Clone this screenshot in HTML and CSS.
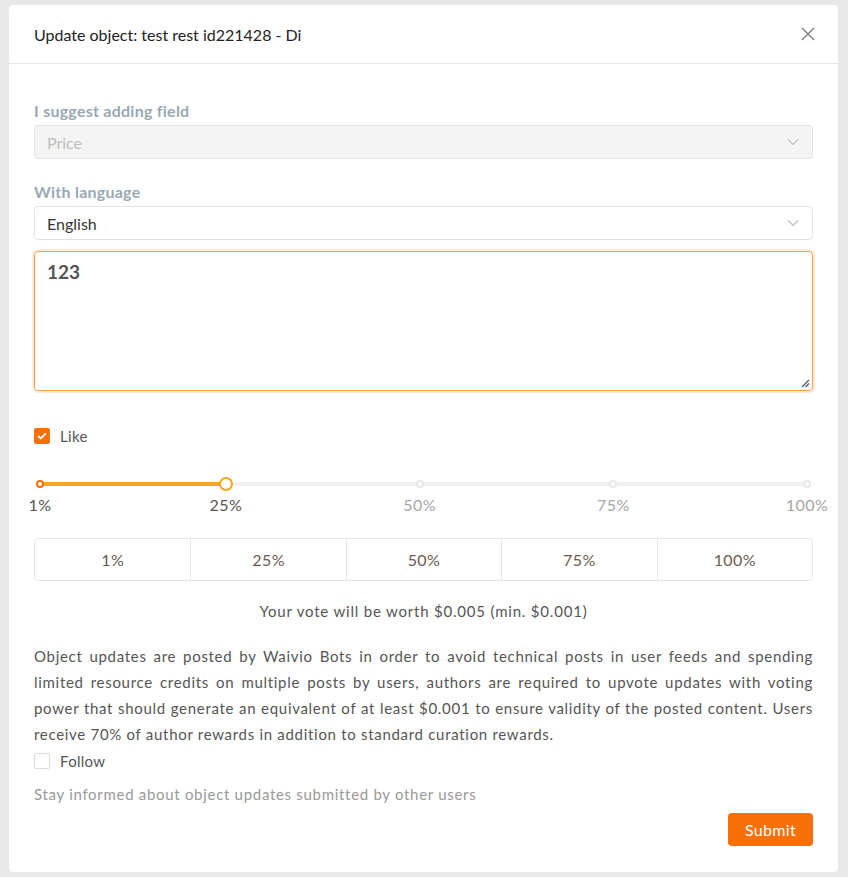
FILE: index.html
```html
<!DOCTYPE html>
<html>
<head>
<meta charset="utf-8">
<link rel="stylesheet" href="styles.css">
</head>
<body>
<div class="modal">
  <div class="modal-header">
    <span class="title">Update object: test rest id221428 - Di</span>
    <span class="close"><svg width="14" height="14" viewBox="0 0 14 14"><path d="M1 1L13 13M13 1L1 13" stroke="#777" stroke-width="1.3" fill="none"/></svg></span>
  </div>
  <div class="modal-body">
    <div class="label first">I suggest adding field</div>
    <div class="select disabled"><span>Price</span><svg class="arrow" width="12" height="8" viewBox="0 0 12 8"><path d="M1 1.5L6 6.5L11 1.5" stroke="#bfbfbf" stroke-width="1.2" fill="none"/></svg></div>
    <div class="label second">With language</div>
    <div class="select"><span>English</span><svg class="arrow" width="12" height="8" viewBox="0 0 12 8"><path d="M1 1.5L6 6.5L11 1.5" stroke="#bfbfbf" stroke-width="1.2" fill="none"/></svg></div>
    <div class="textarea"><span class="value">123</span><svg class="grip" width="9" height="9" viewBox="0 0 9 9"><path d="M8 1L1 8M8 4.5L4.5 8" stroke="#555" stroke-width="1.2"/></svg></div>
    <div class="check-row like"><span class="checkbox checked"><svg width="10" height="8" viewBox="0 0 10 8"><path d="M1.2 4L3.8 6.5L8.8 1.3" stroke="#fff" stroke-width="1.8" fill="none"/></svg></span><span>Like</span></div>
    <div class="slider">
      <div class="rail"></div>
      <div class="track" style="width:24.24%"></div>
      <span class="dot active" style="left:0%"></span>
      <span class="dot" style="left:49.49%"></span>
      <span class="dot" style="left:74.75%"></span>
      <span class="dot" style="left:100%"></span>
      <span class="handle" style="left:24.24%"></span>
      <span class="mark on" style="left:0%">1%</span>
      <span class="mark on" style="left:24.24%">25%</span>
      <span class="mark" style="left:49.49%">50%</span>
      <span class="mark" style="left:74.75%">75%</span>
      <span class="mark" style="left:100%">100%</span>
    </div>
    <div class="btn-group">
      <div class="seg">1%</div>
      <div class="seg">25%</div>
      <div class="seg">50%</div>
      <div class="seg">75%</div>
      <div class="seg">100%</div>
    </div>
    <div class="worth">Your vote will be worth $0.005 (min. $0.001)</div>
    <p class="info">Object updates are posted by Waivio Bots in order to avoid technical posts in user feeds and spending limited resource credits on multiple posts by users, authors are required to upvote updates with voting power that should generate an equivalent of at least $0.001 to ensure validity of the posted content. Users receive 70% of author rewards in addition to standard curation rewards.</p>
    <div class="check-row follow"><span class="checkbox"></span><span>Follow</span></div>
    <div class="hint">Stay informed about object updates submitted by other users</div>
    <div class="footer"><button class="submit">Submit</button></div>
  </div>
</div>
</body>
</html>
```
FILE: styles.css
```css
html, body {
  margin: 0;
  padding: 0;
}
body {
  background: #e8e8e8;
  font-family: Lato, "Open Sans", sans-serif;
  width: 848px;
  height: 877px;
  overflow: hidden;
}
.modal {
  margin: 5px 0 0 9px;
  width: 829px;
  height: 867px;
  background: #fff;
  border-radius: 4px;
  box-sizing: border-box;
}
.modal-header {
  height: 59px;
  border-bottom: 1px solid #e8e8e8;
  box-sizing: border-box;
  padding: 0 25px;
  display: flex;
  align-items: center;
  justify-content: space-between;
}
.title {
  font-size: 16px;
  color: #222;
}
.close {
  display: flex;
  margin-right: -2px;
}
.modal-body {
  padding: 36px 25px 0 25px;
}
.label {
  font-size: 16px;
  font-weight: 700;
  color: #99a9b4;
  line-height: 22px;
  letter-spacing: 0.25px;
}
.label.second {
  margin-top: 22px;
}
.select {
  margin-top: 3px;
  height: 34px;
  box-sizing: border-box;
  border: 1px solid #e3e3e3;
  border-radius: 4px;
  display: flex;
  align-items: center;
  justify-content: space-between;
  padding: 0 13px 0 12px;
  font-size: 16px;
  color: #353535;
}
.select.disabled {
  background: #f4f4f4;
  color: #bdbdbd;
}
.textarea {
  margin-top: 11px;
  height: 140px;
  box-sizing: border-box;
  border: 1px solid #f7a04a;
  border-radius: 4px;
  box-shadow: 0 0 0 2px rgba(248, 112, 7, 0.15);
  position: relative;
  padding: 8px 12px;
}
.value {
  font-size: 19px;
  font-weight: 700;
  color: #555;
}
.grip {
  position: absolute;
  right: 2px;
  bottom: 2px;
}
.check-row {
  display: flex;
  align-items: center;
  gap: 10px;
  font-size: 15px;
  color: #555;
  height: 20px;
  letter-spacing: 0.3px;
}
.like {
  margin-top: 35px;
}
.checkbox {
  width: 16px;
  height: 16px;
  box-sizing: border-box;
  border: 1px solid #dcdcdc;
  border-radius: 2px;
  display: flex;
  align-items: center;
  justify-content: center;
  background: #fff;
}
.checkbox.checked {
  background: #f87007;
  border-color: #f87007;
}
.slider {
  position: relative;
  margin: 26px 6px 0 6px;
  height: 50px;
}
.rail {
  position: absolute;
  left: 0;
  right: 0;
  top: 10px;
  height: 4px;
  background: #f0f0f0;
  border-radius: 2px;
}
.track {
  position: absolute;
  left: 0;
  top: 10px;
  height: 4px;
  background: #f5a623;
  border-radius: 2px;
}
.dot {
  position: absolute;
  top: 8px;
  width: 8px;
  height: 8px;
  box-sizing: border-box;
  margin-left: -4px;
  border: 2px solid #e8e8e8;
  border-radius: 50%;
  background: #fff;
}
.dot.active {
  border-color: #f87007;
}
.handle {
  position: absolute;
  top: 5px;
  width: 14px;
  height: 14px;
  margin-left: -7px;
  box-sizing: border-box;
  border: 2px solid #f5a623;
  border-radius: 50%;
  background: #fff;
}
.mark {
  position: absolute;
  top: 22px;
  transform: translateX(-50%);
  font-size: 16px;
  letter-spacing: 0.4px;
  color: #a6a6a6;
  line-height: 22px;
}
.mark.on {
  color: #555;
}
.btn-group {
  margin-top: 16px;
  height: 43px;
  display: grid;
  grid-template-columns: repeat(5, 1fr);
  border: 1px solid #e6e6e6;
  border-radius: 4px;
  box-sizing: border-box;
}
.seg {
  display: flex;
  align-items: center;
  justify-content: center;
  font-size: 16px;
  letter-spacing: 0.4px;
  color: #6b5a50;
  border-left: 1px solid #e6e6e6;
}
.seg:first-child {
  border-left: none;
}
.worth {
  margin-top: 19px;
  text-align: center;
  font-size: 15px;
  letter-spacing: 0.8px;
  color: #555;
  line-height: 22px;
}
.info {
  margin: 21px 0 0 0;
  font-size: 15px;
  letter-spacing: 0.7px;
  line-height: 26px;
  color: #555;
  text-align: justify;
}
.follow {
  margin-top: 4px;
}
.hint {
  margin-top: 12px;
  font-size: 15px;
  letter-spacing: 0.7px;
  color: #999;
  line-height: 22px;
}
.footer {
  display: flex;
  justify-content: flex-end;
  margin-top: 8px;
}
.submit {
  height: 33px;
  width: 85px;
  border: none;
  border-radius: 4px;
  background: #f87007;
  color: #fff;
  font-family: Lato, sans-serif;
  font-size: 16px;
  letter-spacing: 0.3px;
}
```
